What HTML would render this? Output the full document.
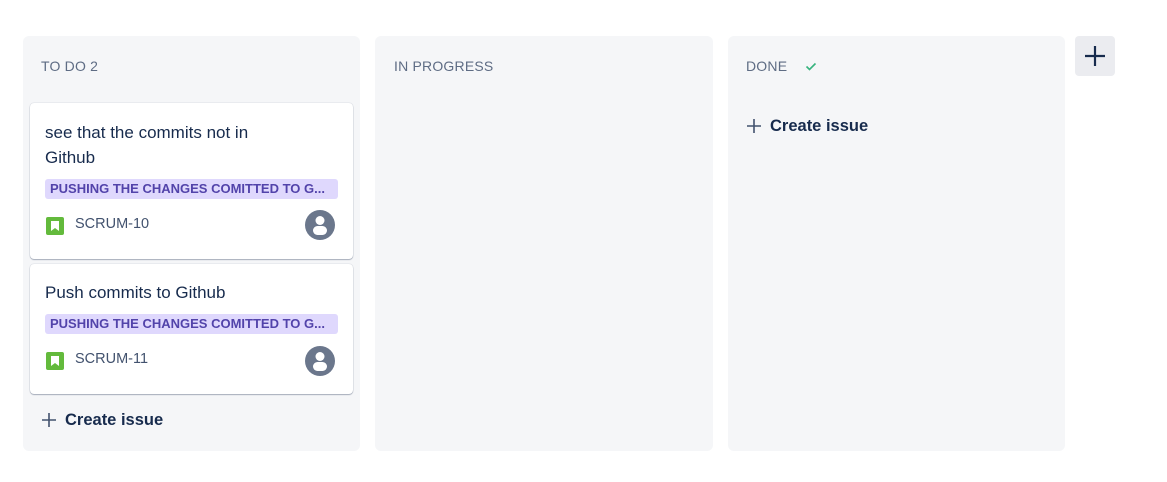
<!DOCTYPE html>
<html><head><style>
*{margin:0;padding:0;box-sizing:border-box}
body{width:1167px;height:482px;background:#fff;font-family:"Liberation Sans",sans-serif;position:relative;overflow:hidden}
.col{position:absolute;top:36px;height:415px;background:#f5f6f8;border-radius:6px}
.hdr{position:absolute;top:58px;font-size:14px;color:#5e6c84;letter-spacing:.2px}
.card{position:absolute;left:30px;width:323px;background:#fff;border-radius:4px;box-shadow:0 1px 1px rgba(9,30,66,.3),0 0 1px rgba(9,30,66,.3)}
.t{position:absolute;left:15px;font-size:17px;color:#172b4d;line-height:25px}
.lbl{position:absolute;left:15px;width:293px;height:20px;background:#dfd8fd;border-radius:3px;color:#5243aa;font-weight:bold;font-size:13px;line-height:20px;padding-left:5px;white-space:nowrap;overflow:hidden}
.ic{position:absolute;left:16px;width:18px;height:18px;background:#63ba3c;border-radius:2px}
.ic:after{content:"";position:absolute;left:5px;top:4px;width:8px;height:10px;background:#fff;clip-path:polygon(0 0,100% 0,100% 100%,50% 70%,0 100%)}
.id{position:absolute;left:45px;font-size:14.5px;color:#42526e}
.av{position:absolute;left:275px;width:30px;height:30px}
.ci{position:absolute;font-size:16.5px;font-weight:bold;color:#172b4d}
.ci svg{position:absolute;left:-24px;top:1px}
</style></head><body>
<div class="col" style="left:23px;width:337px"></div>
<div class="col" style="left:375px;width:338px"></div>
<div class="col" style="left:728px;width:337px"></div>
<div style="position:absolute;left:1075px;top:36px;width:40px;height:40px;background:#ebecf0;border-radius:4px">
<svg width="40" height="40"><path d="M20 10v20M10 20h20" stroke="#172b4d" stroke-width="2.2"/></svg></div>
<div class="hdr" style="left:41px">TO DO 2</div>
<div class="hdr" style="left:394px">IN PROGRESS</div>
<div class="hdr" style="left:746px">DONE</div>
<svg style="position:absolute;left:804px;top:59px" width="14" height="14"><path d="M2.5 7.5l3 3 6-6" fill="none" stroke="#36b37e" stroke-width="1.6"/></svg>

<div class="card" style="top:103px;height:156px">
<div class="t" style="top:17px">see that the commits not in<br>Github</div>
<div class="lbl" style="top:76px">PUSHING THE CHANGES COMITTED TO G...</div>
<div class="ic" style="top:114px"></div>
<div class="id" style="top:113px">SCRUM-10</div>
<svg class="av" style="top:107px" viewBox="0 0 30 30"><circle cx="15" cy="15" r="15" fill="#6b778c"/><circle cx="15" cy="10.5" r="4.5" fill="#fff"/><rect x="8" y="16" width="14" height="9" rx="4.5" fill="#fff"/></svg>
</div>
<div class="card" style="top:264px;height:130px">
<div class="t" style="top:16px">Push commits to Github</div>
<div class="lbl" style="top:50px">PUSHING THE CHANGES COMITTED TO G...</div>
<div class="ic" style="top:88px"></div>
<div class="id" style="top:87px">SCRUM-11</div>
<svg class="av" style="top:82px" viewBox="0 0 30 30"><circle cx="15" cy="15" r="15" fill="#6b778c"/><circle cx="15" cy="10.5" r="4.5" fill="#fff"/><rect x="8" y="16" width="14" height="9" rx="4.5" fill="#fff"/></svg>
</div>
<div class="ci" style="left:65px;top:411px"><svg width="16" height="16"><path d="M8 1v14M1 8h14" stroke="#42526e" stroke-width="1.6"/></svg>Create issue</div>
<div class="ci" style="left:770px;top:117px"><svg width="16" height="16"><path d="M8 1v14M1 8h14" stroke="#42526e" stroke-width="1.6"/></svg>Create issue</div>
</body></html>
